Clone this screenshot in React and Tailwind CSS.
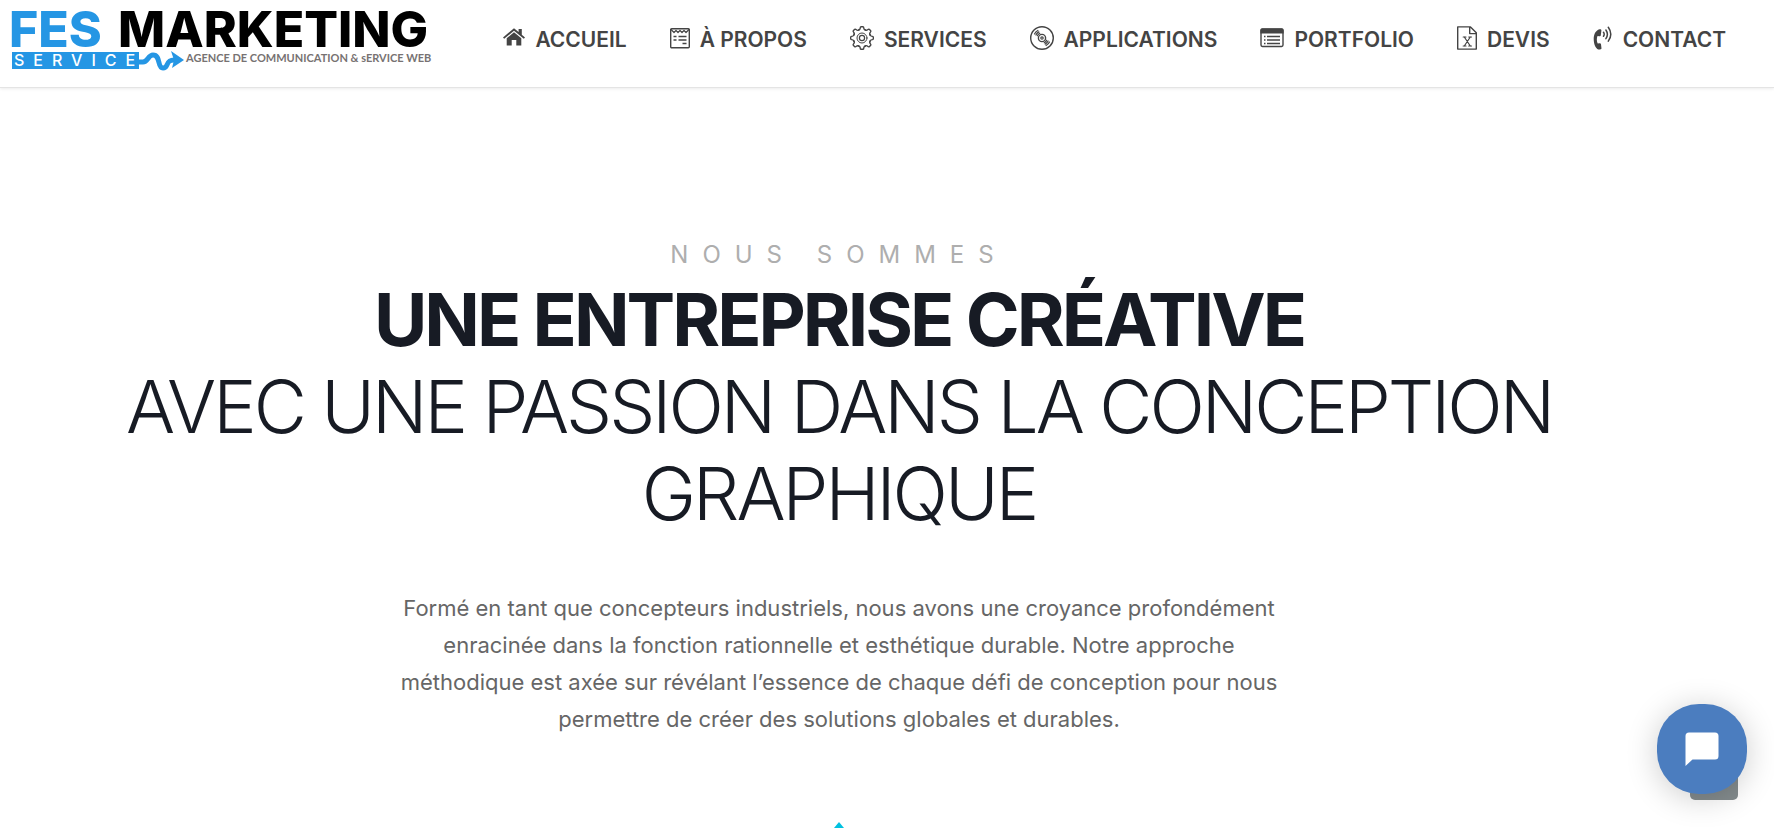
const stroke = {
  fill: "none",
  stroke: "currentColor",
  strokeLinecap: "round",
  strokeLinejoin: "round",
};

function HomeIcon() {
  return (
    <svg className="h-6 w-[22px] shrink-0" viewBox="1 0 22 24" fill="currentColor" aria-hidden="true">
      <path d="M12 2.200 1 11.400l1.200 1.400L12 4.700l9.800 8.100L23 11.400l-3.200-2.700V3h-3.200v3z" />
      <path d="M12 6.300 4.700 12.300V19.500h5v-5.500h4.600v5.500h5v-7.200z" />
    </svg>
  );
}

function FormIcon() {
  return (
    <svg className="h-6 w-5 shrink-0" viewBox="2 0 20 24" aria-hidden="true">
      <rect x="2.7" y="2.7" width="18.6" height="19" rx="1" {...stroke} strokeWidth="1.4" />
      <path d="M3 3.500 6 6.500l2-2 2 2 2-2 2 2 2-2 2 2L21 3.500" {...stroke} strokeWidth="1.2" />
      <path d="M5.500 10.500h3M10.500 10.500h8M5.500 14h3M10.500 14h8M14.500 17.500h4" {...stroke} strokeLinecap="butt" strokeWidth="1.4" />
    </svg>
  );
}

const gearAngles = [0, 45, 90, 135, 180, 225, 270, 315];

function GearIcon() {
  return (
    <svg className="h-6 w-6 shrink-0" viewBox="0 0 24 24" aria-hidden="true">
      {gearAngles.map((angle) => (
        <path
          key={angle}
          transform={`rotate(${angle} 12 12)`}
          d="M8.400 4.200C9.700 3.800 10 3.500 10.100 2.600Q10.200.7 10.900.7h2.200Q13.800.7 13.900 2.600C14 3.500 14.300 3.800 15.600 4.200Q16 4.300 15.900 3.900"
          {...stroke}
          strokeWidth="1.4"
        />
      ))}
      <circle cx="12" cy="12" r="5" {...stroke} strokeWidth="1" />
      <circle cx="12" cy="12" r="2.600" {...stroke} strokeWidth="1.200" />
    </svg>
  );
}

function DiscIcon() {
  return (
    <svg className="h-6 w-6 shrink-0" viewBox="0 0 24 24" aria-hidden="true">
      <circle cx="12" cy="12" r="11.300" {...stroke} strokeWidth="1.400" />
      <circle cx="12" cy="12" r="3.600" {...stroke} strokeWidth="1.400" />
      <circle cx="12" cy="12" r="1.200" {...stroke} strokeWidth="1.200" />
      <path
        d="M4.500 7.900Q5.600 5.600 7.900 4.500M5.900 8.900Q6.900 6.900 8.900 5.900M7.300 9.800Q8.100 8.100 9.800 7.300M19.500 16.100Q18.400 18.400 16.100 19.500M18.100 15.100Q17.100 17.100 15.100 18.100M16.700 14.200Q15.900 15.900 14.200 16.700"
        {...stroke}
        strokeWidth="1.200"
      />
    </svg>
  );
}

function ListIcon() {
  return (
    <svg className="h-6 w-6 shrink-0" viewBox="0 0 24 24" aria-hidden="true">
      <rect x="1" y="3" width="22" height="17.500" rx="1.400" {...stroke} strokeWidth="1.400" />
      <path d="M.4 7.500V4Q.4 2.400 2 2.400h20q1.600 0 1.600 1.600V7.500z" fill="currentColor" />
      <path d="M4 10.500h1.500M7 10.500h13M4 14h1.500M7 14h13M4 17.500h1.500M7 17.500h13" {...stroke} strokeLinecap="butt" strokeWidth="1.400" />
    </svg>
  );
}

function SheetIcon() {
  return (
    <svg className="h-6 w-5 shrink-0" viewBox="2 0 20 24" aria-hidden="true">
      <path d="M2.700.900h12.800l5.800 5.800v16.400H2.700zM14.700 1v6.600h6.500" {...stroke} strokeWidth="1.400" />
      <path d="m9.300 11 6 9M15.300 11l-6 9M8.200 11h2.800M13.700 11h2.800M8.200 20h2.800M13.700 20h2.800" {...stroke} strokeWidth="1.200" />
    </svg>
  );
}

function PhoneIcon() {
  return (
    <svg className="h-6 w-5 shrink-0" viewBox="0 0 20 24" aria-hidden="true">
      <path
        d="M6.500 3.300C2.500 4.500.7 8.500.7 13c0 5 1.800 9.500 4.600 10.400 1.300.4 2.800 0 3.200-1l-.5-4.200c-.1-.8-.7-1.100-1.300-1l-2 .3C3.600 15.500 3.600 12.200 4.500 10l2 .2c.7 0 1.200-.3 1.300-1L8.400 4.500c.1-.9-.9-1.500-1.900-1.200z"
        fill="currentColor"
      />
      <path d="M10.500 6.300q1.400 2 0 4M12.900 4q3 4.300 0 8.600M15.300 1.300q5 7 0 13.800" {...stroke} strokeWidth="1.500" />
    </svg>
  );
}

const links = [
  { label: "ACCUEIL", Icon: HomeIcon },
  { label: "À PROPOS", Icon: FormIcon },
  { label: "SERVICES", Icon: GearIcon },
  { label: "APPLICATIONS", Icon: DiscIcon },
  { label: "PORTFOLIO", Icon: ListIcon },
  { label: "DEVIS", Icon: SheetIcon },
  { label: "CONTACT", Icon: PhoneIcon },
];

function Logo() {
  return (
    <svg className="h-[64px] w-[420px] overflow-visible" viewBox="0 0 420 64" role="img" aria-label="Fes Marketing Service">
      <g fontFamily="Inter, sans-serif">
        <text x="-3" y="39" fontSize="50" fontWeight="800" fill="#2596e4">FES</text>
        <text x="106" y="39" fontSize="50" fontWeight="800" fill="#000">MARKETING</text>
        <rect x="0" y="44" width="127" height="17" fill="#2596e4" />
        <text x="2" y="58" fontSize="16" fontWeight="500" letterSpacing="9" fill="#fff">SERVICE</text>
        <path d="M127 54h4c5 0 5-7 10-7 8 0 4 13 10 13 6 0 2-8 11-8" fill="none" stroke="#2596e4" strokeWidth="5" />
        <path d="m159 43 13 9-12 8 2-8z" fill="#2596e4" />
        <text x="174" y="54" fontSize="11" fontWeight="700" fill="#777272" fontFamily="Lato, sans-serif">AGENCE DE COMMUNICATION &amp; sERVICE WEB</text>
      </g>
    </svg>
  );
}

export default function App() {
  return (
    <div className="min-h-screen overflow-hidden bg-white font-['Inter',sans-serif]">
      <header className="flex h-[88px] items-start justify-between border-b border-[#e4e4e4] pr-12 pl-3 shadow-[0_1px_3px_rgba(0,0,0,0.08)]">
        <a href="#accueil" className="mt-2 shrink-0">
          <Logo />
        </a>
        <nav className="mt-[26px] flex gap-[43px] text-[#444]">
          {links.map(({ label, Icon }) => (
            <a key={label} href="#" className="flex items-start gap-2.5 text-[21px] leading-7 font-semibold whitespace-nowrap">
              <Icon />
              <span>{label}</span>
            </a>
          ))}
        </nav>
      </header>

      <main className="flex flex-col items-center pt-[149px] pr-24 text-center">
        <p className="text-2xl leading-9 tracking-[14px] text-[#aeaeae]">NOUS SOMMES</p>
        <h1 className="mt-[3px] text-[73px] leading-[87px] font-light tracking-[-3px] text-[#171b24]">
          <strong className="block font-bold">UNE ENTREPRISE CRÉATIVE</strong>
          AVEC UNE PASSION DANS LA CONCEPTION
          <br />
          GRAPHIQUE
        </h1>
        <p className="mt-[53px] text-[22px] leading-[37px] text-[#666]">
          Formé en tant que concepteurs industriels, nous avons une croyance profondément
          <br />
          enracinée dans la fonction rationnelle et esthétique durable. Notre approche
          <br />
          méthodique est axée sur révélant l’essence de chaque défi de conception pour nous
          <br />
          permettre de créer des solutions globales et durables.
        </p>
        <svg className="mt-[84px] h-[6px] w-[10px]" viewBox="0 0 10 6" aria-hidden="true">
          <path d="M5 0 10 6H0z" fill="#00c1e0" />
        </svg>
      </main>

      <button type="button" aria-label="Haut de page" className="fixed right-9 bottom-7 h-12 w-12 rounded-[5px] bg-[#848c8e]" />
      <button
        type="button"
        aria-label="Ouvrir la discussion"
        className="fixed right-[27px] bottom-[34px] flex h-[90px] w-[90px] items-center justify-center rounded-[42px] bg-[#4b7dbf] shadow-[0_4px_32px_rgba(0,0,0,0.2)]"
      >
        <svg className="h-[34px] w-[34px]" viewBox="0 0 34 34" aria-hidden="true">
          <path d="M4 .5h26q3.500 0 3.500 3.500v20q0 3.500-3.500 3.500H7.500L.5 34V4Q.5.5 4 .5z" fill="#fff" />
        </svg>
      </button>
    </div>
  );
}
